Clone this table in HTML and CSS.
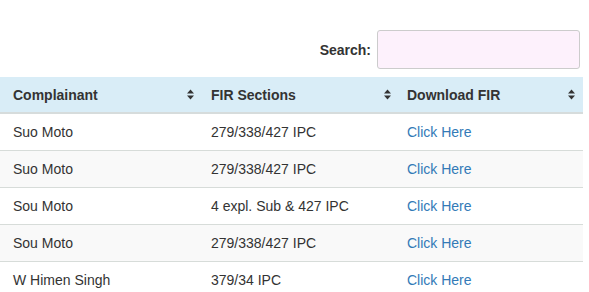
FILE: index.html
```html
<!DOCTYPE html>
<html>
<head>
<meta charset="utf-8">
<link rel="stylesheet" href="styles.css">
</head>
<body>
<div class="wrap">
  <div class="filter">
    <label class="filter-label" for="q">Search:</label>
    <input class="filter-input" id="q" type="search">
  </div>
  <table class="grid">
    <colgroup><col class="c1"><col class="c2"><col class="c3"></colgroup>
    <thead>
      <tr>
        <th class="h1">Complainant<svg class="sort" viewBox="0 0 7 11"><polygon points="0,4.5 3.5,0.5 7,4.5"/><polygon points="0,6.5 7,6.5 3.5,10.5"/></svg></th>
        <th class="h2">FIR Sections<svg class="sort" viewBox="0 0 7 11"><polygon points="0,4.5 3.5,0.5 7,4.5"/><polygon points="0,6.5 7,6.5 3.5,10.5"/></svg></th>
        <th class="h3">Download FIR<svg class="sort" viewBox="0 0 7 11"><polygon points="0,4.5 3.5,0.5 7,4.5"/><polygon points="0,6.5 7,6.5 3.5,10.5"/></svg></th>
      </tr>
    </thead>
    <tbody>
      <tr><td>Suo Moto</td><td>279/338/427 IPC</td><td><a href="#">Click Here</a></td></tr>
      <tr><td>Suo Moto</td><td>279/338/427 IPC</td><td><a href="#">Click Here</a></td></tr>
      <tr><td>Sou Moto</td><td>4 expl. Sub &amp; 427 IPC</td><td><a href="#">Click Here</a></td></tr>
      <tr><td>Sou Moto</td><td>279/338/427 IPC</td><td><a href="#">Click Here</a></td></tr>
      <tr><td>W Himen Singh</td><td>379/34 IPC</td><td><a href="#">Click Here</a></td></tr>
    </tbody>
  </table>
</div>
</body>
</html>
```

FILE: styles.css
```css
html, body {
  margin: 0;
  padding: 0;
  background: #fff;
}
body {
  font-family: "Liberation Sans", Arial, sans-serif;
  font-size: 14px;
  color: #333;
}
.wrap {
  width: 583px;
}
.filter {
  display: flex;
  justify-content: flex-end;
  align-items: center;
  gap: 6px;
  padding-top: 30px;
  padding-right: 3px;
  margin-bottom: 8px;
}
.filter-label {
  font-weight: bold;
  font-size: 14px;
}
.filter-input {
  box-sizing: border-box;
  width: 203px;
  height: 39px;
  margin: 0;
  border: 1px solid #ccc;
  border-radius: 3px;
  background: #fdf1fc;
  outline: none;
  -webkit-appearance: none;
  appearance: none;
}
.grid {
  width: 583px;
  border-collapse: collapse;
  table-layout: fixed;
}
.c1 { width: 198px; }
.c2 { width: 196px; }
.c3 { width: 189px; }
.grid th {
  position: relative;
  background: #d9edf7;
  text-align: left;
  font-weight: bold;
  height: 35px;
  padding: 0 0 0 13px;
  line-height: 20px;
  border-bottom: 2px solid #d6dcdc;
  box-sizing: content-box;
}
.grid td {
  height: 36px;
  padding: 0 0 0 13px;
  line-height: 20px;
  border-bottom: 1px solid #d7dcd9;
  box-sizing: content-box;
}
.grid tbody tr:nth-child(even) td {
  background: #f9f9f9;
}
.sort {
  position: absolute;
  top: 12px;
  width: 7px;
  height: 11px;
  fill: #333;
}
.h1 .sort { right: 4px; }
.h2 .sort { right: 3px; }
.h3 .sort { right: 8px; }
a {
  color: #337ab7;
  text-decoration: none;
}
```
